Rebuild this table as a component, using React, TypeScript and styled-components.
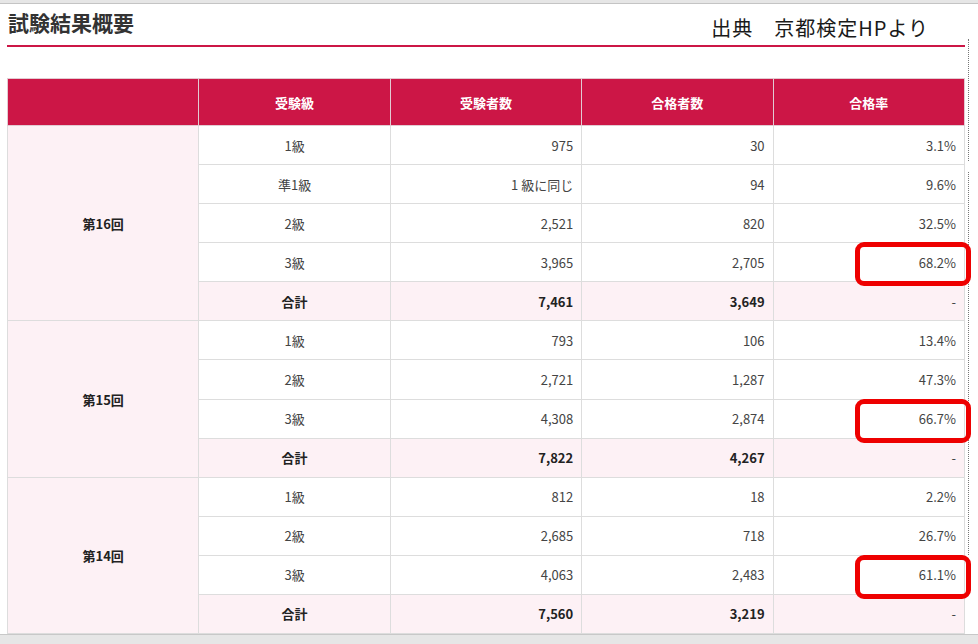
import React from "react";
import styled, { createGlobalStyle } from "styled-components";

const Global = createGlobalStyle`
  html, body { margin: 0; padding: 0; background: #fff; }
  body { font-family: "Noto Sans CJK JP", "Noto Sans", sans-serif; color: #333; }
`;

const Page = styled.div`
  position: relative;
  width: 978px;
  height: 644px;
  overflow: hidden;
  display: flex;
  flex-direction: column;
  background: #fff;
`;

const TopBar = styled.div`
  height: 3px;
  background: #e6e6e6;
  border-bottom: 1px solid #c4c4c4;
  flex: none;
`;

const Header = styled.header`
  margin-left: 7px;
  width: 958px;
  height: 41px;
  border-bottom: 2px solid #cc1646;
  display: flex;
  justify-content: space-between;
  align-items: flex-start;
  flex: none;
`;

const Title = styled.h2`
  margin: 3px 0 0 1px;
  font-size: 21px;
  line-height: 30px;
  font-weight: 700;
  color: #333;
  letter-spacing: 0;
`;

const Source = styled.div`
  margin: 9px 36px 0 0;
  font-size: 20px;
  line-height: 30px;
  font-weight: 400;
  color: #1a1a1a;
  letter-spacing: 1px;
`;

const TableWrap = styled.div`
  margin: 31px 0 0 7px;
  flex: none;
`;

const Table = styled.table`
  width: 958px;
  table-layout: fixed;
  border-collapse: collapse;
  font-size: 13px;
`;

const Th = styled.th`
  height: 46px;
  padding: 0;
  background: #cc1646;
  color: #fff;
  font-weight: 700;
  font-size: 13px;
  border: 1px solid #e2cbd2;
  text-align: center;
`;

const Td = styled.td<{ $align?: "left" | "center" | "right"; $total?: boolean; $bold?: boolean }>`
  position: relative;
  height: 39.08px;
  padding: 0 8px 0 8px;
  box-sizing: border-box;
  border: 1px solid #dddddd;
  text-align: ${(p) => p.$align ?? "center"};
  background: ${(p) => (p.$total ? "#fdf1f5" : "#fff")};
  font-weight: ${(p) => (p.$bold ? 700 : 400)};
  color: ${(p) => (p.$bold ? "#222" : "#444")};
  font-family: "Noto Sans CJK JP", "Noto Sans", sans-serif;
`;

const LabelTd = styled.td`
  padding: 0;
  border: 1px solid #dddddd;
  background: #fdf1f5;
  text-align: center;
  font-weight: 700;
  color: #222;
`;

const Highlight = styled.span`
  position: absolute;
  z-index: 2;
  left: 81px;
  right: -7px;
  top: -1px;
  bottom: -5px;
  border: 5px solid #ee0000;
  border-radius: 9px;
  box-sizing: border-box;
  pointer-events: none;
`;

const Dotted = styled.div<{ $top: number; $h: number }>`
  position: absolute;
  left: 968px;
  top: ${(p) => p.$top}px;
  height: ${(p) => p.$h}px;
  border-left: 1px dotted #777;
`;

const Footer = styled.div`
  flex: 1;
  background: #e6e6e6;
  border-top: 1px solid #c8c8c8;
`;

type Row = { grade: string; examinees: string; passers: string; rate: string; hl?: boolean; total?: boolean };
type Section = { label: string; rows: Row[] };

const data: Section[] = [
  {
    label: "第16回",
    rows: [
      { grade: "1級", examinees: "975", passers: "30", rate: "3.1%" },
      { grade: "準1級", examinees: "1 級に同じ", passers: "94", rate: "9.6%" },
      { grade: "2級", examinees: "2,521", passers: "820", rate: "32.5%" },
      { grade: "3級", examinees: "3,965", passers: "2,705", rate: "68.2%", hl: true },
      { grade: "合計", examinees: "7,461", passers: "3,649", rate: "-", total: true },
    ],
  },
  {
    label: "第15回",
    rows: [
      { grade: "1級", examinees: "793", passers: "106", rate: "13.4%" },
      { grade: "2級", examinees: "2,721", passers: "1,287", rate: "47.3%" },
      { grade: "3級", examinees: "4,308", passers: "2,874", rate: "66.7%", hl: true },
      { grade: "合計", examinees: "7,822", passers: "4,267", rate: "-", total: true },
    ],
  },
  {
    label: "第14回",
    rows: [
      { grade: "1級", examinees: "812", passers: "18", rate: "2.2%" },
      { grade: "2級", examinees: "2,685", passers: "718", rate: "26.7%" },
      { grade: "3級", examinees: "4,063", passers: "2,483", rate: "61.1%", hl: true },
      { grade: "合計", examinees: "7,560", passers: "3,219", rate: "-", total: true },
    ],
  },
];

export default function App() {
  return (
    <Page>
      <Global />
      <TopBar />
      <Header>
        <Title>試験結果概要</Title>
        <Source>出典　京都検定HPより</Source>
      </Header>
      <TableWrap>
        <Table>
          <thead>
            <tr>
              <Th />
              <Th>受験級</Th>
              <Th>受験者数</Th>
              <Th>合格者数</Th>
              <Th>合格率</Th>
            </tr>
          </thead>
          <tbody>
            {data.map((sec) =>
              sec.rows.map((r, i) => (
                <tr key={sec.label + i}>
                  {i === 0 && <LabelTd rowSpan={sec.rows.length}>{sec.label}</LabelTd>}
                  <Td $total={r.total} $bold={r.total}>{r.grade}</Td>
                  <Td $align="right" $total={r.total} $bold={r.total}>{r.examinees}</Td>
                  <Td $align="right" $total={r.total} $bold={r.total}>{r.passers}</Td>
                  <Td $align="right" $total={r.total}>
                    {r.rate}
                    {r.hl && <Highlight />}
                  </Td>
                </tr>
              ))
            )}
          </tbody>
        </Table>
      </TableWrap>
      <Footer />
      <Dotted $top={39} $h={122} />
      <Dotted $top={172} $h={383} />
    </Page>
  );
}
